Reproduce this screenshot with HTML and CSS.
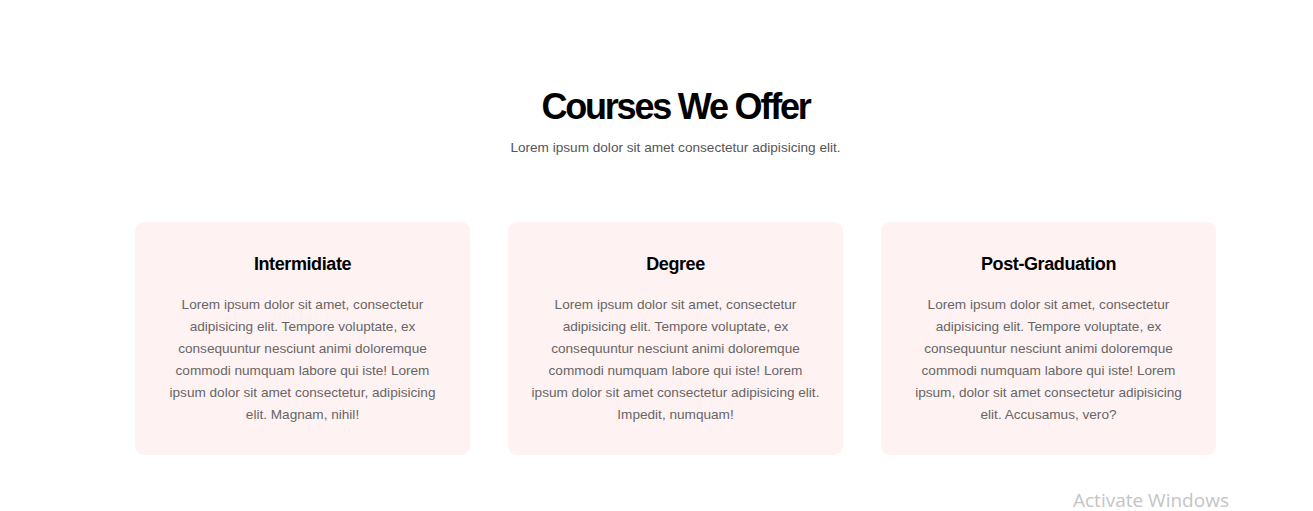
FILE: index.html
```html
<!DOCTYPE html>
<html>
<head>
<meta charset="utf-8">
<link rel="stylesheet" href="styles.css">
</head>
<body>
<section class="courses">
  <h1 class="title">Courses We Offer</h1>
  <p class="subtitle">Lorem ipsum dolor sit amet consectetur adipisicing elit.</p>
  <div class="cards">
    <div class="card">
      <h3>Intermidiate</h3>
      <p>Lorem ipsum dolor sit amet, consectetur adipisicing elit. Tempore voluptate, ex consequuntur nesciunt animi doloremque commodi numquam labore qui iste! Lorem ipsum dolor sit amet consectetur, adipisicing elit. Magnam, nihil!</p>
    </div>
    <div class="card">
      <h3>Degree</h3>
      <p>Lorem ipsum dolor sit amet, consectetur adipisicing elit. Tempore voluptate, ex consequuntur nesciunt animi doloremque commodi numquam labore qui iste! Lorem ipsum dolor sit amet consectetur adipisicing elit. Impedit, numquam!</p>
    </div>
    <div class="card">
      <h3>Post-Graduation</h3>
      <p>Lorem ipsum dolor sit amet, consectetur adipisicing elit. Tempore voluptate, ex consequuntur nesciunt animi doloremque commodi numquam labore qui iste! Lorem ipsum, dolor sit amet consectetur adipisicing elit. Accusamus, vero?</p>
    </div>
  </div>
</section>
<div class="activate">Activate Windows</div>
</body>
</html>
```
FILE: styles.css
```css
html, body {
  margin: 0;
  padding: 0;
  background: #fff;
}
body {
  font-family: "Liberation Sans", Arial, sans-serif;
  width: 1313px;
  height: 511px;
  overflow: hidden;
}
.courses {
  width: 1081px;
  margin-left: 135px;
  padding-top: 87px;
  text-align: center;
}
.title {
  margin: 0;
  font-size: 36px;
  line-height: 40px;
  font-weight: 700;
  color: #000;
  letter-spacing: -2.2px;
}
.subtitle {
  margin: 13px 0 0;
  font-size: 13.6px;
  line-height: 16px;
  color: #555;
}
.cards {
  margin-top: 66px;
  display: flex;
  gap: 38px;
}
.card {
  flex: 1;
  height: 233px;
  box-sizing: border-box;
  background: #fff2f2;
  border-radius: 9px;
  padding: 31px 23px 0;
}
.card h3 {
  margin: 0;
  font-size: 18px;
  line-height: 22px;
  font-weight: 700;
  color: #000;
  letter-spacing: -0.4px;
}
.card p {
  margin: 19px 0 0;
  font-size: 13.6px;
  line-height: 22px;
  color: #666;
}
.activate {
  position: absolute;
  left: 1073px;
  top: 487px;
  font-family: "Open Sans", sans-serif;
  font-size: 19px;
  color: #c4c4c4;
}
```
